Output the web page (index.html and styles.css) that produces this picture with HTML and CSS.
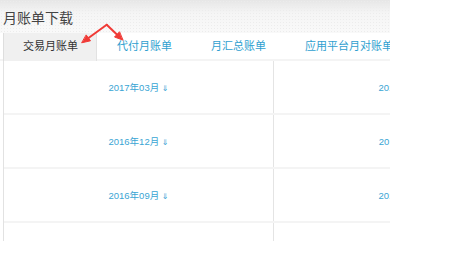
FILE: index.html
```html
<!DOCTYPE html>
<html lang="zh-CN">
<head>
  <meta charset="UTF-8">
  <meta name="viewport" content="width=device-width, initial-scale=1.0">
  <title>月账单下载</title>
  <link rel="stylesheet" href="styles.css">
</head>
<body>

  <section class="panel">
    <header class="panel-head">
      <h2>月账单下载</h2>
    </header>

    <nav class="tabs">
      <a class="tab active">交易月账单</a>
      <a class="tab">代付月账单</a>
      <a class="tab">月汇总账单</a>
      <a class="tab">应用平台月对账单</a>
    </nav>

    <div class="bills">
      <div class="row">
        <div class="cell"><a class="bill">2017年03月 <i>⇓</i></a></div>
        <div class="cell"><a class="bill">2017年02月 <i>⇓</i></a></div>
      </div>
      <div class="row">
        <div class="cell"><a class="bill">2016年12月 <i>⇓</i></a></div>
        <div class="cell"><a class="bill">2016年11月 <i>⇓</i></a></div>
      </div>
      <div class="row">
        <div class="cell"><a class="bill">2016年09月 <i>⇓</i></a></div>
        <div class="cell"><a class="bill">2016年08月 <i>⇓</i></a></div>
      </div>
      <div class="row">
        <div class="cell"><a class="bill">2016年06月 <i>⇓</i></a></div>
        <div class="cell"><a class="bill">2016年05月 <i>⇓</i></a></div>
      </div>
    </div>

    <!-- annotation arrows pointing at the two tabs -->
    <svg class="marks" width="140" height="50" viewBox="0 0 140 50">
      <g fill="#f03a36" stroke="#f03a36" stroke-width="2" stroke-linecap="round">
        <line x1="106.7" y1="24.7" x2="88.5" y2="38"/>
        <line x1="106.7" y1="24.7" x2="116.9" y2="34.5"/>
        <polygon stroke-width="1" points="82,42.7 90.5,40.8 86.4,35.2"/>
        <polygon stroke-width="1" points="122.7,40 114.5,37 119.3,32"/>
      </g>
    </svg>
  </section>

</body>
</html>
```

FILE: styles.css
```css
body {
  margin: 0;
  background: #fff;
  font-family: "Liberation Sans", "Noto Sans CJK SC", sans-serif;
}

.panel {
  position: relative;
  width: 390px;
  height: 241px;
  overflow: hidden;
}

.panel-head {
  height: 33px;
  background:
    radial-gradient(circle, #ececec 0.7px, transparent 0.9px) 0 12px / 3px 3px,
    linear-gradient(#e6e6e6, #f5f5f5 40%, #f9f9f9);
  h2 {
    margin: 0;
    padding: 8px 0 0 3px;
    font-size: 14px;
    font-weight: normal;
    line-height: 20px;
    color: #444;
  }
}

.tabs {
  display: flex;
  padding-left: 3px;
  border-bottom: 2px solid #f4f4f4;
  white-space: nowrap;

  .tab {
    padding: 0 19px 0 20px;
    font-size: 11px;
    line-height: 26px;
    color: #2f9fd0;
    cursor: pointer;
  }
  .tab.active {
    margin-bottom: -2px;
    padding: 0 18px 0 19px;
    background: #f0f0f0;
    border-left: 1px solid #dedede;
    border-right: 1px solid #e2e2e2;
    color: #333;
  }
}

.bills {
  margin-left: 3px;
  border-left: 1px solid #e2e2e2;
}

.row {
  display: flex;
  border-bottom: 2px solid #f4f4f4;
}

.cell {
  flex: 0 0 270px;
  box-sizing: border-box;
  height: 52px;
  display: flex;
  align-items: center;
  justify-content: center;
  border-right: 1px solid #e4e4e4;
}

.bill {
  font-size: 9.5px;
  color: #3aa5d4;
  white-space: nowrap;
  cursor: pointer;
  i {
    font-style: normal;
    font-family: "DejaVu Sans", sans-serif;
    font-size: 8px;
  }
}

.marks {
  position: absolute;
  left: 0;
  top: 0;
}
```
